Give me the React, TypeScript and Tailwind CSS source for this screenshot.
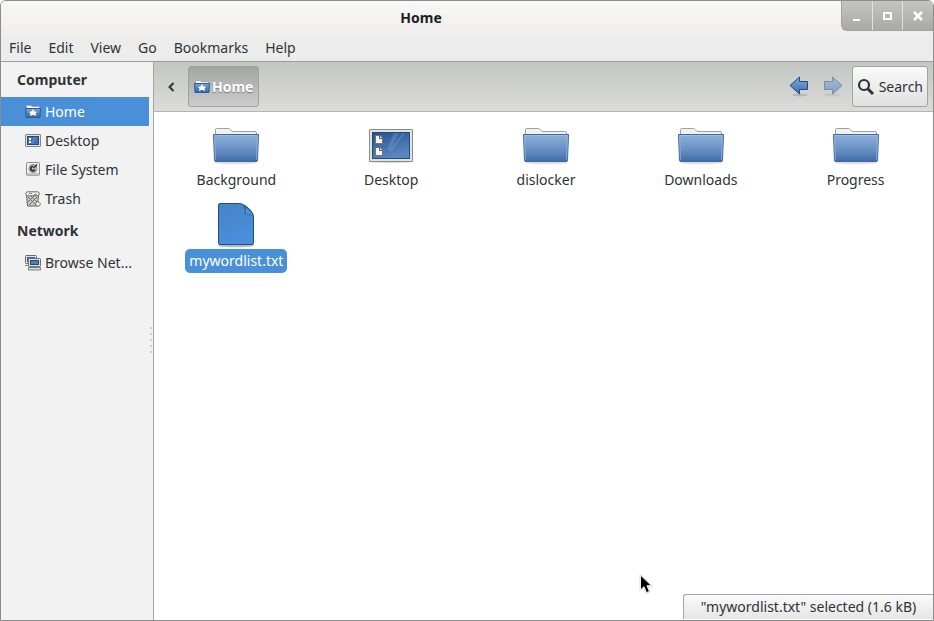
import React from 'react'

const menus = ['File', 'Edit', 'View', 'Go', 'Bookmarks', 'Help']

const HomeIcon = () => (
    <svg width="16" height="16" viewBox="0 0 16 16" className="shrink-0" aria-hidden="true">
        <defs>
            <linearGradient id="homeFill" x1="0" y1="0" x2="0" y2="1">
                <stop offset="0" stopColor="#7ba3d3" />
                <stop offset="1" stopColor="#3465a4" />
            </linearGradient>
        </defs>
        <path d="M1.5 5V1.5h4.5l1 1h7.5V5" fill="#f6f6f4" stroke="#a3a59e" />
        <path d="M.5 4.5h15l-.5 9H1z" fill="url(#homeFill)" stroke="#2d5c9d" />
        <path d="M8 5 9.200 7.200 12 8 10.500 9.500 11 12 8 10.800 5 12 5.500 9.500 4 8 6.800 7.200z" fill="#fff" />
    </svg>
)

const DesktopSmallIcon = () => (
    <svg width="16" height="16" viewBox="0 0 16 16" className="shrink-0" aria-hidden="true">
        <rect x=".5" y="1.5" width="15" height="12" rx=".5" fill="#e4e4df" stroke="#85877f" />
        <rect x="2.5" y="3.5" width="11" height="8" fill="#4270b0" stroke="#204a87" />
        <path d="M9 4h3l-4 7H6z" fill="#6d94c8" opacity=".6" />
        <path d="M4 5h2v2H4zM4 8h2v2H4z" fill="#fff" />
    </svg>
)

const DriveIcon = () => (
    <svg width="16" height="16" viewBox="0 0 16 16" className="shrink-0" aria-hidden="true">
        <rect x="1.5" y=".5" width="13" height="13" rx="1" fill="#f0f0ee" stroke="#8a8c87" />
        <path d="M2 11h12v2.5H2z" fill="#c4c6c1" />
        <circle cx="8" cy="6.5" r="4" fill="#c6c8c4" stroke="#8a8c87" />
        <path d="M8.3 3.4a3.2 3.2 0 1 0 2.5 4.8L8.5 7z" fill="#3c3e3b" />
        <path d="m8 6.7 4-4.2" stroke="#2e3436" strokeWidth="1.4" />
        <circle cx="7.8" cy="6.6" r="1" fill="#ddd" />
    </svg>
)

const TrashIcon = () => (
    <svg width="16" height="16" viewBox="0 0 16 16" className="shrink-0" aria-hidden="true">
        <path d="M1.5 3.5h12l-1 11.5h-10z" fill="#c9cbc6" stroke="#5f615d" />
        <path d="m3 6 8 8M6 5l6 6M12 6l-8 8M9 5l-6 6" stroke="#6b6d69" />
        <rect x=".8" y=".8" width="13.5" height="4" rx="1.8" fill="#f0f0ee" stroke="#6b6d69" />
        <path d="M4 2.5h3M9 3.5h3" stroke="#888a85" />
        <path d="m10.5 12.5 2.5-2 2.5 2-1 2.5h-3z" fill="#f2f2f0" stroke="#7b7d79" />
    </svg>
)

const NetworkIcon = () => (
    <svg width="16" height="16" viewBox="0 0 16 16" className="shrink-0" aria-hidden="true">
        <rect x=".5" y=".5" width="11" height="8" rx=".8" fill="#e4e4df" stroke="#6a6c67" />
        <path d="M2 2h8v5H2z" fill="#3465a4" />
        <path d="M0 10.5h6" stroke="#7b7d78" />
        <rect x="3.5" y="3.5" width="12" height="8" rx=".8" fill="#e4e4df" stroke="#6a6c67" />
        <rect x="5.5" y="5.5" width="8" height="4" fill="#4f7cba" stroke="#204a87" />
        <path d="M3.5 12.5h12V15h-12z" fill="#d3d5d0" stroke="#6a6c67" strokeWidth=".8" />
    </svg>
)

const FolderIcon = () => (
    <svg width="48" height="40" viewBox="0 0 48 40" aria-hidden="true">
        <defs>
            <linearGradient id="folderFill" x1="0" y1="0" x2="0" y2="1">
                <stop offset="0" stopColor="#90b0da" />
                <stop offset=".65" stopColor="#6289be" />
                <stop offset="1" stopColor="#3f6ba9" />
            </linearGradient>
        </defs>
        <ellipse cx="24" cy="35.5" rx="21" ry="1.8" fill="#000" opacity=".13" />
        <path d="M3.5 8V2.5q0-1 1-1h12q1 0 1.5.8L19.5 4q.5.5 1.5.5h22q1.5 0 1.5 1.5v2" fill="#f1f1ef" stroke="#a0a29d" />
        <path d="M1.5 7.5h45l-1 26q-.1 1-1 1h-41q-.9 0-1-1z" fill="url(#folderFill)" stroke="#3a68a8" />
        <path d="M2.5 8.5h43M2.6 9l.9 24M45.4 9l-.9 24" fill="none" stroke="#a9c3e5" opacity=".6" />
    </svg>
)

const DesktopIcon = () => (
    <svg width="48" height="40" viewBox="0 0 48 40" aria-hidden="true">
        <defs>
            <linearGradient id="deskFill" x1="0" y1="0" x2=".4" y2="1">
                <stop offset="0" stopColor="#24508f" />
                <stop offset="1" stopColor="#5a87c2" />
            </linearGradient>
        </defs>
        <ellipse cx="24" cy="34.5" rx="23" ry="1.5" fill="#000" opacity=".18" />
        <rect x="2.5" y="2.5" width="43" height="32" rx=".5" fill="#e3e3de" stroke="#8a8c85" />
        <rect x="5.5" y="5.5" width="37" height="26" fill="url(#deskFill)" stroke="#204a87" />
        <path d="M27 6h5l-9 17h-3zM36 6h2L25 24h-3z" fill="#8cadd8" opacity=".3" />
        {[8, 20].map((y) => (
            <g key={y} transform={`translate(8 ${y})`}>
                <path d="M.5.5h4.500l2.500 2.500v5.500h-7z" fill="#f4f4f1" stroke="#77756a" />
                <path d="M4.500 1v2.500h2.500" fill="none" stroke="#55574f" />
            </g>
        ))}
    </svg>
)

const TextFileIcon = () => (
    <svg width="40" height="45" viewBox="0 0 40 45" aria-hidden="true">
        <defs>
            <linearGradient id="fileFill" x1="0" y1="0" x2=".3" y2="1">
                <stop offset="0" stopColor="#4584c6" />
                <stop offset="1" stopColor="#4a8fdb" />
            </linearGradient>
        </defs>
        <ellipse cx="20" cy="42.5" rx="18" ry="1.8" fill="#000" opacity=".28" />
        <path d="M4 .5h19.5c5 0 14 8 14 13V40q0 1.500-1.500 1.500H4Q2.500 41.500 2.500 40V2Q2.500.5 4 .5z" fill="url(#fileFill)" stroke="#1d5088" />
        <path d="M26 2c3 2 3 5 2.500 9.500 4-1 7 .5 8.500 2.500-.5-5-6-11-11-12z" fill="#2a66a6" />
        <path d="M29.500 10.500c1-2 .5-4 0-5.500 3.500 2 6 4.500 7 7.500-2-1.500-4.500-2.300-7-2z" fill="#5594d8" />
    </svg>
)

const ArrowIcon = ({ flip }: { flip?: boolean }) => (
    <svg width="22" height="22" viewBox="0 0 22 22" className={flip ? '-scale-x-100 opacity-50' : ''} aria-hidden="true">
        <defs>
            <linearGradient id="arrowFill" x1="0" y1="0" x2="0" y2="1">
                <stop offset="0" stopColor="#82abdc" />
                <stop offset="1" stopColor="#3d6dae" />
            </linearGradient>
        </defs>
        <ellipse cx="12" cy="19" rx="8" ry="1.5" fill="#000" opacity=".13" />
        <path d="M2 9.5 11.5 1v4.5h8v8h-8V18z" fill="url(#arrowFill)" stroke="#204a87" strokeLinejoin="round" />
    </svg>
)

interface PlaceProps {
    label: string
    icon: React.ReactNode
    active?: boolean
}

const Place: React.FC<PlaceProps> = ({ label, icon, active }) => (
    <li>
        <button
            className={`flex h-[29px] w-full items-center gap-1 pl-6 text-left whitespace-nowrap ${active ? 'bg-[#4a90d9] text-white' : ''}`}
        >
            {icon}
            {label}
        </button>
    </li>
)

const files = [
    { name: 'Background', icon: <FolderIcon /> },
    { name: 'Desktop', icon: <DesktopIcon /> },
    { name: 'dislocker', icon: <FolderIcon /> },
    { name: 'Downloads', icon: <FolderIcon /> },
    { name: 'Progress', icon: <FolderIcon /> },
    { name: 'mywordlist.txt', icon: <TextFileIcon />, selected: true },
]

const windowButton = 'flex h-[29px] flex-1 items-center justify-center border-l border-[#e2e2e0]'

export default function App() {
    return (
        <div className="relative flex min-h-screen flex-col overflow-hidden rounded-t-md border border-[#8c8c8c] bg-[#ededed] font-['Noto_Sans','Open_Sans',sans-serif] text-sm leading-5 text-[#2e3436]">
            <header className="flex h-9 items-start bg-linear-to-b from-[#f8f8f7] to-[#eeedec]">
                <h1 className="flex-1 pt-[7px] text-center text-sm font-bold text-[#1c1f20]">Home</h1>
                <div className="flex w-[92px] overflow-hidden rounded-bl-md border-b border-l border-[#a2a2a0] bg-linear-to-b from-[#c4c4c2] to-[#a9a9a7]">
                    <button aria-label="Minimize" className="flex h-[29px] flex-1 items-center justify-center">
                        <svg width="12" height="12" viewBox="0 0 12 12"><path d="M2 9h7v2H2z" fill="#fff" /></svg>
                    </button>
                    <button aria-label="Maximize" className={windowButton}>
                        <svg width="12" height="12" viewBox="0 0 12 12"><path d="M2 3h7v6H2z" fill="none" stroke="#fff" strokeWidth="2" /></svg>
                    </button>
                    <button aria-label="Close" className={windowButton}>
                        <svg width="12" height="12" viewBox="0 0 12 12"><path d="m2 2 8 8M10 2l-8 8" stroke="#fff" strokeWidth="2.5" /></svg>
                    </button>
                </div>
            </header>

            <nav className="flex h-[25px] gap-[17px] border-b border-[#9b9d9b] bg-[#ececec] pl-2">
                {menus.map((menu) => (
                    <button key={menu} className="h-[22px]">{menu}</button>
                ))}
            </nav>

            <div className="flex flex-1">
                <aside className="relative w-[153px] shrink-0 border-r border-[#a5a5a5] bg-[#f2f2f2] pr-1">
                    <h2 className="h-[35px] pl-4 text-sm leading-9 font-bold">Computer</h2>
                    <ul>
                        <Place label="Home" icon={<HomeIcon />} active />
                        <Place label="Desktop" icon={<DesktopSmallIcon />} />
                        <Place label="File System" icon={<DriveIcon />} />
                        <Place label="Trash" icon={<TrashIcon />} />
                    </ul>
                    <h2 className="h-[35px] pl-4 text-sm leading-9 font-bold">Network</h2>
                    <ul>
                        <Place label="Browse Net..." icon={<NetworkIcon />} />
                    </ul>
                    {/* resize grip */}
                    <div className="absolute top-[265px] right-px flex flex-col gap-1">
                        {[0, 1, 2, 3, 4].map((dot) => (
                            <span key={dot} className="h-0.5 w-0.5 bg-[#d0d0d0]" />
                        ))}
                    </div>
                </aside>

                <main className="flex min-w-0 flex-1 flex-col bg-white">
                    <div className="flex h-[50px] items-center border-b border-[#b4b6b3] bg-linear-to-b from-[#c4c6c3] to-[#dbdcda] pr-[5px]">
                        <button aria-label="Scroll path" className="flex h-10 w-[34px] items-center justify-center">
                            <svg width="8" height="10" viewBox="0 0 8 10"><path d="M6.5 1 2.5 5l4 4" fill="none" stroke="#2e3436" strokeWidth="2" /></svg>
                        </button>
                        <button className="flex h-[41px] items-center gap-0.5 rounded-[3px] border border-[#a0a29f] bg-linear-to-b from-[#a3a5a2] to-[#cbcccb] px-[5px] font-bold text-white text-shadow-[0_1px_1px_#777]">
                            <HomeIcon />
                            Home
                        </button>
                        <div className="ml-auto flex items-center">
                            <button aria-label="Back" className="flex w-[34px] justify-center"><ArrowIcon /></button>
                            <button aria-label="Forward" className="flex w-[34px] justify-center"><ArrowIcon flip /></button>
                            <button className="ml-0.5 flex h-[41px] items-center gap-1 rounded-[3px] border border-[#a2a4a1] bg-linear-to-b from-[#fafafa] to-[#e0e0e0] px-1">
                                <svg width="18" height="18" viewBox="0 0 18 18" fill="none" stroke="#2e3436" aria-hidden="true">
                                    <circle cx="7" cy="7" r="5" strokeWidth="2.2" />
                                    <path d="m10.5 10.5 5.5 5.5" strokeWidth="3" />
                                </svg>
                                Search
                            </button>
                        </div>
                    </div>

                    <ul className="grid grid-cols-5 gap-y-[11px] pt-[15px] pl-[5px]">
                        {files.map((file) => (
                            <li key={file.name}>
                                <button className="flex w-full flex-col items-center gap-px">
                                    {file.icon}
                                    <span className={`px-1 py-0.5 ${file.selected ? 'rounded-[5px] bg-[#4a90d9] text-white' : ''}`}>
                                        {file.name}
                                    </span>
                                </button>
                            </li>
                        ))}
                    </ul>
                </main>
            </div>

            <p className="absolute right-0 bottom-px min-w-[250px] rounded-tl-[3px] border-t border-l border-[#a5a5a5] bg-linear-to-b from-[#fafafa] to-[#e6e6e6] px-3 py-0.5 text-center">
                "mywordlist.txt" selected (1.6 kB)
            </p>

            <svg className="absolute top-[573px] left-[638px]" width="14" height="21" viewBox="0 0 14 21" aria-hidden="true">
                <path d="M1.5 1v15l3.5-3.3 2.5 6 3-1.3-2.5-5.7h4.5z" fill="#000" stroke="#fff" />
                <path d="M1 .5v16l3.8-3.2 2.4 6 4-1.600-2.500-5.500h4.800z" fill="none" stroke="#bbb" strokeWidth=".5" />
            </svg>
        </div>
    )
}
